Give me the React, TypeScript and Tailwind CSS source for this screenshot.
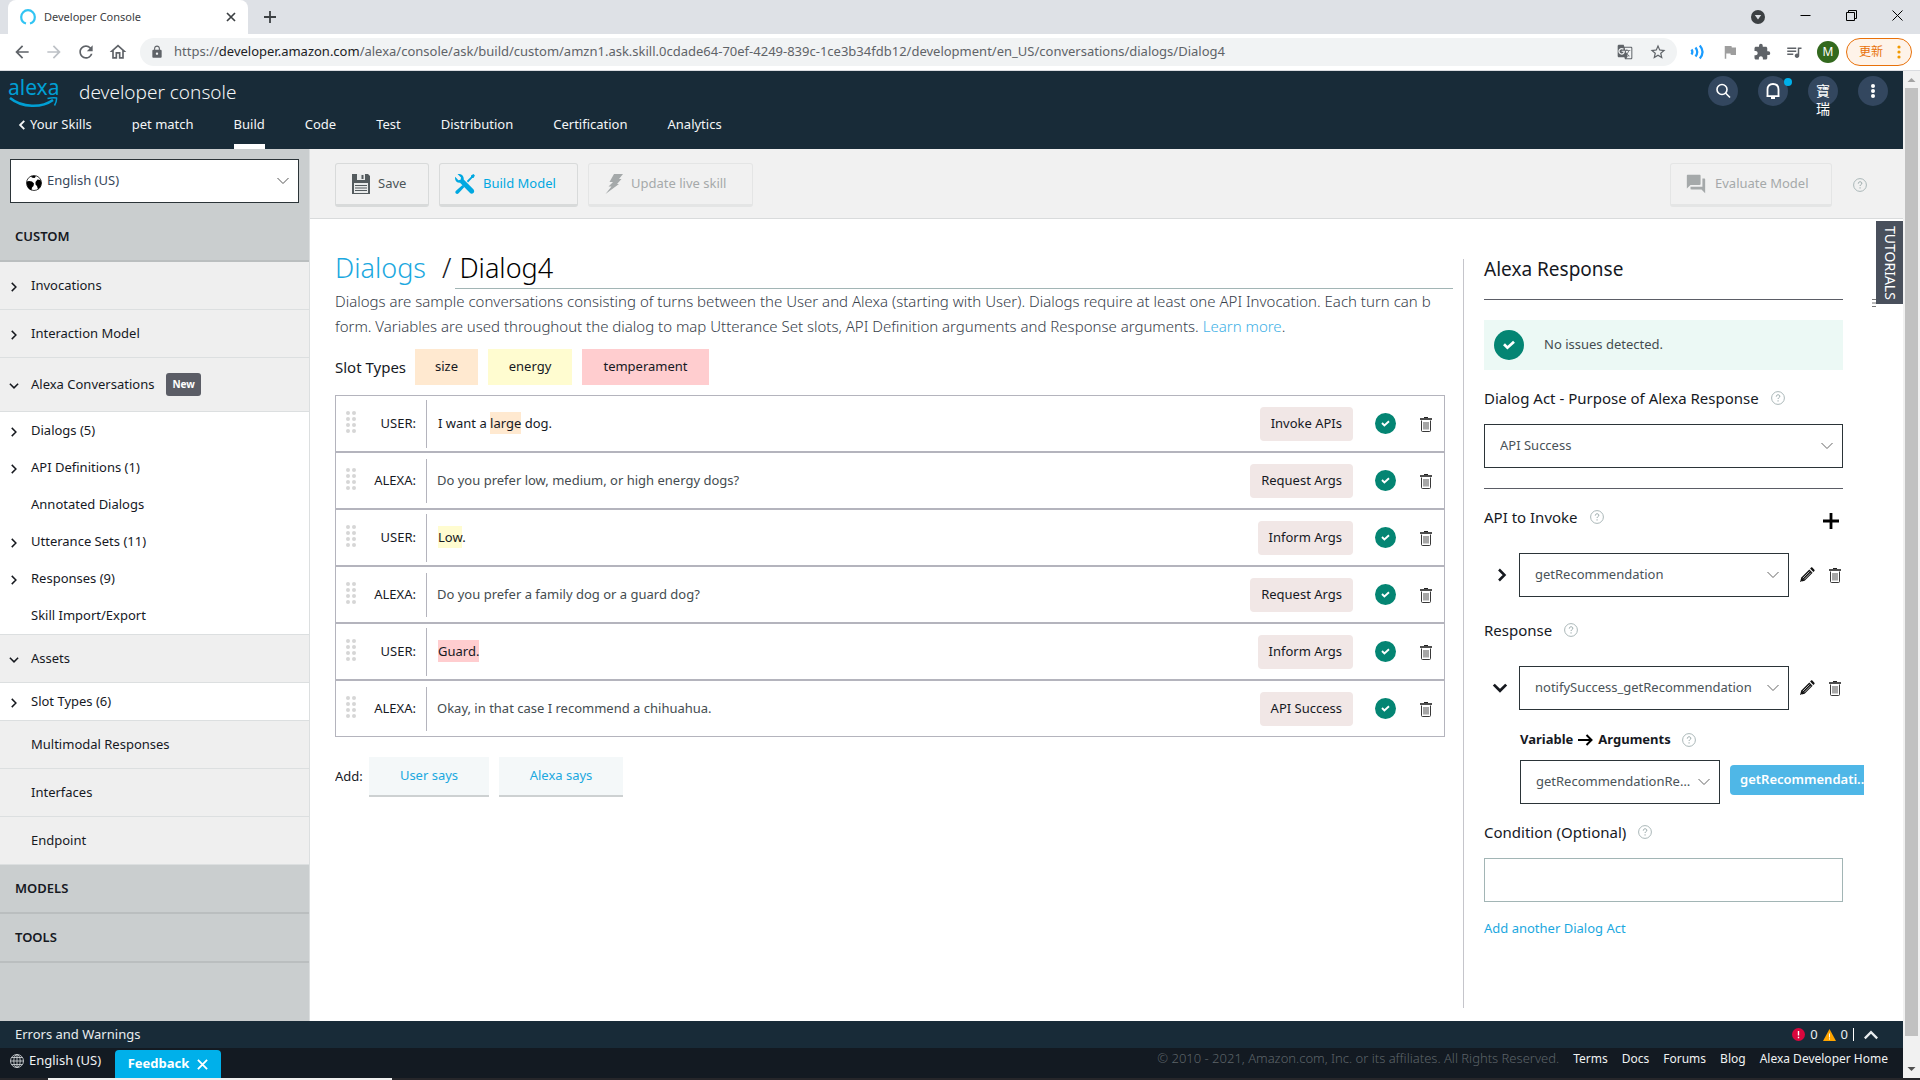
import type { ReactNode } from 'react';
import clsx from 'clsx';
import {
  MdArrowBack,
  MdArrowForward,
  MdExtension,
  MdFlag,
  MdForum,
  MdGTranslate,
  MdLock,
  MdOutlineHome,
  MdQueueMusic,
  MdRefresh,
  MdStarBorder,
} from 'react-icons/md';

type Tint = 'size' | 'energy' | 'temperament';

const TINTS: Record<Tint, string> = {
  size: 'bg-[#ffe9d0]',
  energy: 'bg-[#fffcd0]',
  temperament: 'bg-[#ffcdcf]',
};

const NAV_ITEMS = ['pet match', 'Build', 'Code', 'Test', 'Distribution', 'Certification', 'Analytics'];

const CONVERSATION_ITEMS = [
  { label: 'Dialogs (5)', arrow: true },
  { label: 'API Definitions (1)', arrow: true },
  { label: 'Annotated Dialogs', arrow: false },
  { label: 'Utterance Sets (11)', arrow: true },
  { label: 'Responses (9)', arrow: true },
  { label: 'Skill Import/Export', arrow: false },
];

const TURNS: { who: 'USER' | 'ALEXA'; text: ReactNode; act: string }[] = [
  {
    who: 'USER',
    text: (
      <>
        I want a <Mark tint="size">large</Mark> dog.
      </>
    ),
    act: 'Invoke APIs',
  },
  { who: 'ALEXA', text: 'Do you prefer low, medium, or high energy dogs?', act: 'Request Args' },
  {
    who: 'USER',
    text: (
      <>
        <Mark tint="energy">Low</Mark>.
      </>
    ),
    act: 'Inform Args',
  },
  { who: 'ALEXA', text: 'Do you prefer a family dog or a guard dog?', act: 'Request Args' },
  { who: 'USER', text: <Mark tint="temperament">Guard.</Mark>, act: 'Inform Args' },
  { who: 'ALEXA', text: 'Okay, in that case I recommend a chihuahua.', act: 'API Success' },
];

function Mark({ tint, children }: { tint: Tint; children: ReactNode }) {
  return <span className={clsx('py-0.5', TINTS[tint])}>{children}</span>;
}

function Chevron({ dir, className }: { dir: 'right' | 'down' | 'up' | 'left'; className?: string }) {
  const d = {
    right: 'M5 2.5l5.5 5.5L5 13.5',
    left: 'M11 2.5L5.5 8l5.5 5.5',
    down: 'M2.5 5L8 10.5l5.5-5.5',
    up: 'M2.5 11L8 5.5l5.5 5.5',
  }[dir];
  return (
    <svg viewBox="0 0 16 16" className={className} fill="none" stroke="currentColor" aria-hidden="true">
      <path d={d} />
    </svg>
  );
}

function HelpIcon() {
  return (
    <button type="button" aria-label="Help" className="shrink-0">
      <svg viewBox="0 0 14 14" className="size-3.5" fill="none" aria-hidden="true">
        <circle cx="7" cy="7" r="6.4" stroke="#aab7b8" />
        <path d="M5.3 5.6c0-1.1.8-1.8 1.8-1.8s1.7.6 1.7 1.5c0 1.2-1.7 1.3-1.7 2.7M7.05 9.3v1.2" stroke="#95a5a6" />
      </svg>
    </button>
  );
}

function CheckCircle({ className }: { className: string }) {
  return (
    <svg viewBox="0 0 21 21" className={clsx('shrink-0', className)} aria-hidden="true">
      <circle cx="10.5" cy="10.5" r="10.5" fill="#048573" />
      <path d="M7 10l2.4 2.4 4.6-4.2" fill="none" stroke="#fff" strokeWidth="1.9" />
    </svg>
  );
}

function TrashButton() {
  return (
    <button type="button" aria-label="Delete" className="shrink-0">
      <svg viewBox="0 0 12 16" className="h-4 w-3" fill="none" stroke="#222" aria-hidden="true">
        <path d="M4 1.5h4" />
        <path d="M0 3h12" strokeWidth="1.6" />
        <path d="M1.5 4.5v10q0 1 1 1h7q1 0 1-1v-10" strokeWidth=".9" />
        <path d="M4 6v7.5M6 6v7.5M8 6v7.5" strokeWidth=".8" />
      </svg>
    </button>
  );
}

function PencilButton() {
  return (
    <button type="button" aria-label="Edit" className="shrink-0">
      <svg viewBox="0 0 16 16" className="size-4" fill="#111" aria-hidden="true">
        <path d="M1 15l1.3-4.6 8-8 3.300 3.300-8 8z" />
        <path d="M11.1 1.600l1-1c.4-.4.8-.4 1.200 0l2.100 2.100c.4.4.4.8 0 1.200l-1 1z" />
        <path d="M3.800 11.200l6.700-6.700M5.200 12.400l6.700-6.700M2 13.900l.8.8" stroke="#fff" strokeWidth=".7" />
      </svg>
    </button>
  );
}

function Select({ label, value, className }: { label: string; value: string; className?: string }) {
  return (
    <div className={clsx('relative', className)}>
      <select
        aria-label={label}
        className="h-11 w-full appearance-none overflow-hidden border border-[#2b3438] bg-white pr-6 pl-[15px] text-[13px] text-ellipsis text-[#4a5358]"
      >
        <option>{value}</option>
      </select>
      <Chevron dir="down" className="pointer-events-none absolute top-3.5 right-2 size-4 text-[#666]" />
    </div>
  );
}

function BrowserChrome() {
  return (
    <div className="text-[#3c4043]">
      <div className="flex h-[34px] items-stretch bg-[#dee1e6] pl-2">
        <div className="flex w-60 items-center rounded-t-lg bg-white px-3">
          <svg viewBox="0 0 16 16" className="size-4" fill="none" stroke="#31c4f3" strokeWidth="2.2" aria-hidden="true">
            <path d="M6 14.5C2.7 13.6 1.2 11 1.2 8a6.8 6.8 0 0 1 13.6 0c0 3-1.5 5.6-4.8 6.5" />
          </svg>
          <span className="ml-2 flex-1 text-[11px]">Developer Console</span>
          <button type="button" aria-label="Close tab">
            <svg viewBox="0 0 10 10" className="size-2.5" stroke="#3c4043" strokeWidth="1.7" aria-hidden="true">
              <path d="M1 1l8 8M9 1L1 9" />
            </svg>
          </button>
        </div>
        <button type="button" aria-label="New tab" className="ml-4">
          <svg viewBox="0 0 12 12" className="size-3" stroke="#3c4043" strokeWidth="1.8" aria-hidden="true">
            <path d="M6 0v12M0 6h12" />
          </svg>
        </button>
        <div className="ml-auto flex items-center gap-[35px] pr-[17px] pb-1">
          <svg viewBox="0 0 14 14" className="mt-1 size-3.5" aria-hidden="true">
            <circle cx="7" cy="7" r="7" fill="#3c4043" />
            <path d="M3.8 5h6.4L7 9.5z" fill="#dee1e6" />
          </svg>
          <svg viewBox="0 0 11 11" className="size-[11px]" stroke="#000" aria-hidden="true">
            <path d="M.5 5.5h10" />
          </svg>
          <svg viewBox="0 0 11 11" className="size-[11px]" fill="none" stroke="#000" aria-hidden="true">
            <path d="M.5 2.5h8v8h-8zM2.5 2.5v-2h8v8h-2" />
          </svg>
          <svg viewBox="0 0 11 11" className="size-[11px]" stroke="#000" aria-hidden="true">
            <path d="M.5.5l10 10M10.5.5l-10 10" />
          </svg>
        </div>
      </div>
      <div className="flex h-[37px] items-center border-b border-[#dadce0] bg-white pl-3 text-[#5f6368]">
        <div className="flex w-32 items-center gap-3">
          <MdArrowBack className="size-5" />
          <MdArrowForward className="size-5 text-[#bdc1c6]" />
          <MdRefresh className="size-5" />
          <MdOutlineHome className="size-5" />
        </div>
        <div className="flex h-7 flex-1 items-center rounded-full bg-[#f1f3f4] px-2.5">
          <MdLock className="size-3.5" />
          <span className="ml-2.5 flex-1 text-[13px]">
            https://<span className="text-[#202124]">developer.amazon.com</span>
            /alexa/console/ask/build/custom/amzn1.ask.skill.0cdade64-70ef-4249-839c-1ce3b34fdb12/development/en_US/conversations/dialogs/Dialog4
          </span>
          <MdGTranslate className="size-4" />
          <MdStarBorder className="ml-4 size-[18px]" />
        </div>
        <div className="flex items-center gap-3.5 pr-2 pl-3">
          <svg viewBox="0 0 18 18" className="size-[18px]" fill="none" stroke="#1a9cff" strokeWidth="2.2" aria-hidden="true">
            <path d="M2.5 6.500q1.800 2.500 0 5M6.500 4.500q3.500 4.500 0 9M10.800 2.500q5.500 6.500 0 13" />
          </svg>
          <MdFlag className="size-[18px] text-[#9e9e9e]" />
          <MdExtension className="size-[18px]" />
          <MdQueueMusic className="size-[18px]" />
          <span className="-mr-[7px] flex size-[22px] items-center justify-center rounded-full bg-[#33691e] text-xs text-white">
            M
          </span>
          <button
            type="button"
            className="flex h-7 w-[66px] items-center justify-between rounded-full border border-[#e8710a] bg-[#fef3e9] pr-2.5 pl-3 text-xs text-[#e8710a]"
          >
            更新
            <svg viewBox="0 0 4 14" className="h-3.5 w-1" fill="#f29900" aria-hidden="true">
              <circle cx="2" cy="2" r="1.6" />
              <circle cx="2" cy="7" r="1.6" />
              <circle cx="2" cy="12" r="1.6" />
            </svg>
          </button>
        </div>
      </div>
    </div>
  );
}

function RoundButton({ label, children }: { label: string; children: ReactNode }) {
  return (
    <button
      type="button"
      aria-label={label}
      className="relative flex size-[30px] items-center justify-center rounded-full bg-[#33475f] text-white"
    >
      {children}
    </button>
  );
}

function Header() {
  return (
    <header className="flex h-[78px] justify-between bg-[#182b38] text-[#f4f6f7]">
      <div className="flex flex-col justify-between">
        <div className="flex h-[42px] items-center pl-2">
          <div className="w-[52px] text-[#009fd4]">
            <div className="text-[21px] leading-5">alexa</div>
            <svg viewBox="0 0 52 11" className="h-[11px] w-[52px]" fill="none" stroke="currentColor" aria-hidden="true">
              <path d="M2 1c12 10 32 10 43 2" strokeWidth="2.5" />
              <path d="M39.5 1.5C43 .8 46 .6 48.5 1c.3 2.6-.6 5.2-2 7.5" strokeWidth="1.5" />
            </svg>
          </div>
          <span className="ml-[19px] text-[19px] font-light">developer console</span>
        </div>
        <nav className="flex gap-10 pl-4 text-[13px]">
          <a href="#skills" className="flex h-[34px] items-start gap-0.5">
            <Chevron dir="left" className="mt-1 size-3 stroke-[2.5]" />
            Your Skills
          </a>
          {NAV_ITEMS.map((item) => (
            <a
              key={item}
              href={`#${item}`}
              className={clsx('h-[34px] border-b-[5px]', item === 'Build' ? 'border-white' : 'border-transparent')}
            >
              {item}
            </a>
          ))}
        </nav>
      </div>
      <div className="flex gap-5 pt-[5px] pr-[15px]">
        <RoundButton label="Search">
          <svg viewBox="0 0 16 16" className="size-4" fill="none" stroke="currentColor" strokeWidth="1.6" aria-hidden="true">
            <circle cx="7" cy="6.5" r="5" />
            <path d="M10.5 10l4.5 4.5" />
          </svg>
        </RoundButton>
        <RoundButton label="Notifications">
          <svg viewBox="0 0 16 16" className="size-4" fill="none" stroke="currentColor" strokeWidth="1.8" aria-hidden="true">
            <path d="M1.5 13.2h13M2.5 13V6.5Q2.5 1 8 1t5.5 5.5V13M6 15h4" />
          </svg>
          <span className="absolute top-0.5 -right-1 size-2 rounded-full bg-[#00b0ea]" />
        </RoundButton>
        <RoundButton label="Account">
          <span className="mt-[18px] w-4 text-sm leading-[18px]">寶瑞</span>
        </RoundButton>
        <RoundButton label="More">
          <svg viewBox="0 0 4 14" className="h-3.5 w-1" fill="currentColor" aria-hidden="true">
            <circle cx="2" cy="2" r="2" />
            <circle cx="2" cy="7" r="2" />
            <circle cx="2" cy="12" r="2" />
          </svg>
        </RoundButton>
      </div>
    </header>
  );
}

function SideRow({ label, arrow, className, badge }: { label: string; arrow?: 'right' | 'down'; className: string; badge?: string }) {
  return (
    <button type="button" className={clsx('flex w-full items-center pl-2 text-left', className)}>
      <span className="w-[23px]">{arrow && <Chevron dir={arrow} className="mt-0.5 size-3 stroke-2" />}</span>
      {label}
      {badge && (
        <span className="ml-3 flex h-[23px] items-center rounded-[3px] bg-[#5b5d66] px-1.5 text-[10px] font-bold text-white">
          {badge}
        </span>
      )}
    </button>
  );
}

function Sidebar() {
  const section = 'h-12 border-b border-[#dcdfe0] bg-[#efefef]';
  return (
    <aside className="flex w-[310px] shrink-0 flex-col border-r border-[#dcdfe0] bg-[#cacecf] text-[13px] text-[#16191f]">
      <div className="h-[113px] border-b-2 border-[#babebf]">
        <div className="relative mx-2.5 mt-2.5">
          <select
            aria-label="Language"
            className="h-11 w-full appearance-none border border-[#2b3438] bg-white pl-9 text-[13px] text-[#37475a]"
          >
            <option>English (US)</option>
          </select>
          <svg viewBox="0 0 16 16" className="pointer-events-none absolute top-4 left-4 size-4" aria-hidden="true">
            <circle cx="8" cy="8" r="7.5" fill="#fff" stroke="#111" strokeWidth=".8" />
            <path d="M.8 6.500l2.200-.5 3 .5 2 2-.5 2.500-1.500 1.500-.5 2.800C2.500 14.500.5 11.500.8 6.500zM4.500 1.500L8 .8l2 .8-1.500 1.500-2-.3zM9.500 7l2-2.500L14.500 5l1 3-1 4-2.500 2.500-1-3.500L9.500 9.500z" fill="#000" />
          </svg>
          <Chevron dir="down" className="pointer-events-none absolute top-3.5 right-2 size-4 text-[#555]" />
        </div>
        <h2 className="mt-6 pl-[15px] font-semibold">CUSTOM</h2>
      </div>
      <SideRow label="Invocations" arrow="right" className={section} />
      <SideRow label="Interaction Model" arrow="right" className={section} />
      <SideRow label="Alexa Conversations" arrow="down" badge="New" className="h-[54px] border-b border-[#dcdfe0] bg-[#efefef]" />
      {CONVERSATION_ITEMS.map((item) => (
        <SideRow key={item.label} label={item.label} arrow={item.arrow ? 'right' : undefined} className="h-[37px] bg-white" />
      ))}
      <SideRow label="Assets" arrow="down" className="h-[49px] border-y border-[#dcdfe0] bg-[#efefef]" />
      <SideRow label="Slot Types (6)" arrow="right" className="h-[38px] border-b border-[#dcdfe0] bg-white" />
      <SideRow label="Multimodal Responses" className={section} />
      <SideRow label="Interfaces" className={section} />
      <SideRow label="Endpoint" className={section} />
      <h2 className="flex h-[49px] items-center border-b-2 border-[#babebf] pl-[15px] font-semibold">MODELS</h2>
      <h2 className="flex h-[49px] items-center border-b-2 border-[#babebf] pl-[15px] font-semibold">TOOLS</h2>
    </aside>
  );
}

function ToolbarButton({ icon, label, className }: { icon: ReactNode; label: string; className: string }) {
  return (
    <button
      type="button"
      className={clsx('flex h-11 items-center gap-2 rounded-[3px] border border-b-[3px] text-[13px]', className)}
    >
      {icon}
      {label}
    </button>
  );
}

function Toolbar() {
  return (
    <div className="flex h-[70px] items-start border-b border-[#d9dbdc] bg-[#f1f1f1] pt-3.5 pr-9 pl-[25px]">
      <div className="flex gap-2.5">
        <ToolbarButton
          label="Save"
          className="w-[94px] border-[#d8dada] pl-4 text-[#4c5558]"
          icon={
            <svg viewBox="0 0 18 20" className="h-5 w-[18px]" aria-hidden="true">
              <path d="M0 0h16l2 2v18H0z" fill="#545b5e" />
              <path d="M5 0h8v6H5zM2 9h14v10H2z" fill="#e9ebeb" />
              <path d="M9.5 1h2v4h-2zM3 11h12v1H3zM3 13.5h12v1H3zM3 16h12v1H3z" fill="#545b5e" />
            </svg>
          }
        />
        <ToolbarButton
          label="Build Model"
          className="w-[139px] border-[#d8dada] pl-[15px] text-[#00a8e1]"
          icon={
            <svg viewBox="0 0 20 20" className="size-5" fill="currentColor" aria-hidden="true">
              <path d="M2.5 0L6 3.4 5.6 5.7 3.4 6.2.2 2.8C-.6 6 1.5 9 5 8.8l9.8 10c1 1 2.5 1.2 3.6.2s1-2.7 0-3.7L8.7 5.6C9.2 2 6.2-.6 2.5 0z" />
              <path d="M19.9 1.4L18.5 0 16 1.5v1.3l-4.2 4.3 1.3 1.3L17.3 4h1.2zM7.5 11L1 16.8c-1 1-.8 2 0 2.7.8.8 1.8.6 2.6-.3L9.4 12.900z" />
            </svg>
          }
        />
        <ToolbarButton
          label="Update live skill"
          className="w-[165px] border-[#e4e5e5] pl-4 text-[#a5a9aa]"
          icon={
            <svg viewBox="0 0 18 20" className="h-5 w-[18px]" fill="currentColor" aria-hidden="true">
              <path d="M9 0h9l-4 5h2.5L12 10h2L.5 20l6-7.500h-3L8 8H4.500z" />
            </svg>
          }
        />
      </div>
      <div className="ml-auto flex items-center gap-[21px]">
        <ToolbarButton
          label="Evaluate Model"
          className="w-[162px] border-[#e4e5e5] pl-3.5 text-[#a5a9aa]"
          icon={<MdForum className="size-[22px]" />}
        />
        <HelpIcon />
      </div>
    </div>
  );
}

function TurnRow({ who, text, act }: { who: 'USER' | 'ALEXA'; text: ReactNode; act: string }) {
  const user = who === 'USER';
  return (
    <li className="flex h-[57px] items-center border border-[#b4b4bd] pr-3">
      <svg viewBox="0 0 10 22" className="mb-1 ml-2.5 h-[22px] w-2.5" fill="#d6d6d6" aria-hidden="true">
        {[2, 8, 14, 20].map((y) => (
          <g key={y}>
            <circle cx="2" cy={y} r="2" />
            <circle cx="8" cy={y} r="2" />
          </g>
        ))}
      </svg>
      <span className="w-[60px] text-right text-[#16191f]">{who}:</span>
      <div
        className={clsx(
          'ml-2.5 flex flex-1 items-center border-l border-[#b4b4bd]',
          user ? 'h-12 pl-[11px] text-[#16191f]' : 'h-11 pl-2.5 text-[#444c50]',
        )}
      >
        <p>{text}</p>
      </div>
      <span className="flex h-[34px] items-center rounded bg-[#f1e7e6] px-[11px] text-[#16191f]">{act}</span>
      <CheckCircle className="mr-6 ml-[22px] size-[21px]" />
      <TrashButton />
    </li>
  );
}

function DialogEditor() {
  return (
    <section className="min-w-0 flex-1 overflow-hidden pt-[29px] pr-2.5 text-[13px] text-[#16191f]">
      <h1 className="flex h-[41px] items-start text-[27px] leading-10 font-light">
        <a href="#dialogs" className="text-[#1ba8e0]">
          Dialogs
        </a>
        <span className="mr-1 ml-4">/</span>
        <input
          aria-label="Dialog name"
          defaultValue="Dialog4"
          className="h-[41px] min-w-0 flex-1 border-b border-[#a2b5b5] px-1 pb-px text-black"
        />
      </h1>
      <p className="overflow-hidden text-[15px] leading-[25px] font-light whitespace-nowrap text-[#37404a]">
        Dialogs are sample conversations consisting of turns between the User and Alexa (starting with User). Dialogs
        require at least one API Invocation. Each turn can b
        <br />
        form. Variables are used throughout the dialog to map Utterance Set slots, API Definition arguments and Response
        arguments.{' '}
        <a href="#learn" className="text-[#3db0e6]">
          Learn more
        </a>
        .
      </p>
      <div className="mt-2.5 flex items-center">
        <span className="w-20 text-[15px]">Slot Types</span>
        <div className="flex gap-2.5">
          <span className="flex h-9 w-[63px] items-center justify-center bg-[#ffe9d0]">size</span>
          <span className="flex h-9 w-[84px] items-center justify-center bg-[#fffcd0]">energy</span>
          <span className="flex h-9 w-[127px] items-center justify-center bg-[#ffcdcf]">temperament</span>
        </div>
      </div>
      <ul className="mt-2.5 mr-2">
        {TURNS.map((turn, i) => (
          <TurnRow key={i} {...turn} />
        ))}
      </ul>
      <div className="mt-5 flex items-center gap-2.5">
        <span className="-mr-2.5 w-[34px]">Add:</span>
        <button type="button" className="h-10 w-[120px] border-b-2 border-[#cdd1d2] bg-[#f4f8f9] text-[#1ba8e0]">
          User says
        </button>
        <button type="button" className="h-10 w-[124px] border-b-2 border-[#cdd1d2] bg-[#f4f8f9] text-[#1ba8e0]">
          Alexa says
        </button>
      </div>
    </section>
  );
}

function FieldTitle({ children }: { children: ReactNode }) {
  return (
    <h3 className="flex items-center gap-3 text-[15px] leading-6 text-[#16191f]">
      {children}
      <HelpIcon />
    </h3>
  );
}

function ResponsePanel() {
  return (
    <section className="w-[440px] shrink-0 border-l border-[#c5c5cb] pr-[60px] pl-5 text-[13px] text-[#16191f]">
      <h2 className="h-[41px] border-b border-[#5b5d66] text-[19px] leading-5">Alexa Response</h2>
      <div className="mt-5 flex h-[50px] items-center bg-[#ecf9f5] pl-2.5 text-[#444c50]">
        <CheckCircle className="mr-5 size-[30px]" />
        No issues detected.
      </div>
      <div className="mt-4">
        <FieldTitle>Dialog Act - Purpose of Alexa Response</FieldTitle>
      </div>
      <Select label="Dialog act" value="API Success" className="mt-3.5" />
      <div className="mt-5 flex justify-between border-t border-[#5b5d66] pt-4">
        <FieldTitle>API to Invoke</FieldTitle>
        <button type="button" aria-label="Add API" className="mt-2 mr-1">
          <svg viewBox="0 0 16 16" className="size-4" stroke="#000" strokeWidth="2.8" aria-hidden="true">
            <path d="M8 0v16M0 8h16" />
          </svg>
        </button>
      </div>
      <div className="mt-6 flex items-center pr-0.5">
        <button type="button" aria-label="Expand API" className="w-[35px] pl-2.5">
          <Chevron dir="right" className="size-4 stroke-[2.5]" />
        </button>
        <Select label="API" value="getRecommendation" className="min-w-0 flex-1" />
        <div className="ml-2.5 flex items-center gap-3.5">
          <PencilButton />
          <TrashButton />
        </div>
      </div>
      <div className="mt-[21px]">
        <FieldTitle>Response</FieldTitle>
      </div>
      <div className="mt-6 flex items-center pr-0.5">
        <button type="button" aria-label="Collapse response" className="w-[35px] pl-[7px]">
          <Chevron dir="down" className="size-[18px] stroke-[2.5]" />
        </button>
        <Select label="Response" value="notifySuccess_getRecommendation" className="min-w-0 flex-1" />
        <div className="ml-2.5 flex items-center gap-3.5">
          <PencilButton />
          <TrashButton />
        </div>
      </div>
      <div className="-mr-5 pl-9">
        <h4 className="mt-5 flex items-center font-bold">
          Variable
          <svg viewBox="0 0 15 12" className="mx-[5px] h-3 w-[15px]" fill="none" stroke="#000" strokeWidth="2" aria-hidden="true">
            <path d="M0 6h13.5M8.5 1l5 5-5 5" />
          </svg>
          <span className="mr-[11px]">Arguments</span>
          <HelpIcon />
        </h4>
        <div className="mt-2.5 flex items-start gap-2.5">
          <Select label="Variable" value="getRecommendationResult" className="w-[200px] shrink-0" />
          <span className="mt-[5px] flex h-[30px] flex-1 items-center rounded-l bg-[#4fb7e7] pl-2.5 font-semibold whitespace-nowrap text-white">
            getRecommendati..
          </span>
        </div>
      </div>
      <div className="mt-4">
        <FieldTitle>Condition (Optional)</FieldTitle>
      </div>
      <input aria-label="Condition" className="mt-3.5 h-11 w-full border border-[#a2b5b5] px-4" />
      <a href="#add-act" className="mt-[17px] inline-block text-[#1ba8e0]">
        Add another Dialog Act
      </a>
    </section>
  );
}

function StatusBar() {
  return (
    <div className="flex h-[27px] items-center bg-[#182b38] pr-[23px] pl-[15px] text-[13px] text-[#e9edef]">
      <span>Errors and Warnings</span>
      <div className="ml-auto flex items-center">
        <svg viewBox="0 0 13 13" className="size-[13px]" aria-hidden="true">
          <circle cx="6.5" cy="6.5" r="6.5" fill="#d9073d" />
          <path d="M6.5 3v4.5M6.5 8.8v1.4" stroke="#fff" strokeWidth="1.4" />
        </svg>
        <span className="ml-[5px]">0</span>
        <svg viewBox="0 0 13 12" className="ml-[5px] h-3 w-[13px]" aria-hidden="true">
          <path d="M6.5 0L13 12H0z" fill="#ffa500" />
          <path d="M6.5 4.5v4M6.5 9.3v1.3" stroke="#fff" />
        </svg>
        <span className="ml-[5px]">0</span>
        <span className="mr-2 ml-[5px] h-[13px] w-px bg-white" />
        <button type="button" aria-label="Expand errors">
          <Chevron dir="up" className="size-[18px] stroke-2" />
        </button>
      </div>
    </div>
  );
}

function Footer() {
  return (
    <footer className="relative flex h-[30px] items-center bg-[#131a22] pr-[15px] pb-2 pl-2.5 text-[13px] text-[#f0f2f3]">
      <a href="#language" className="flex items-center gap-[5px] pt-1">
        <svg viewBox="0 0 14 14" className="size-3.5" fill="none" stroke="#c9ced1" strokeWidth=".9" aria-hidden="true">
          <circle cx="7" cy="7" r="6.5" />
          <ellipse cx="7" cy="7" rx="3.2" ry="6.5" />
          <path d="M7 .5v13M.5 7h13M1.5 3.5h11M1.5 10.5h11" />
        </svg>
        English (US)
      </a>
      <button
        type="button"
        className="absolute bottom-0 left-[115px] flex h-7 w-[106px] items-center justify-center gap-2 rounded-t bg-[#00b0ea] text-[13px] font-bold text-white"
      >
        Feedback
        <svg viewBox="0 0 12 12" className="size-[11px]" stroke="#fff" strokeWidth="2" aria-hidden="true">
          <path d="M1 1l10 10M11 1L1 11" />
        </svg>
      </button>
      <p className="mr-3.5 ml-auto font-light text-[#5d6469]">
        © 2010 - 2021, Amazon.com, Inc. or its affiliates. All Rights Reserved.
      </p>
      <nav className="flex gap-3.5 text-xs">
        {['Terms', 'Docs', 'Forums', 'Blog', 'Alexa Developer Home'].map((item) => (
          <a key={item} href={`#${item}`}>
            {item}
          </a>
        ))}
      </nav>
    </footer>
  );
}

function Scrollbar() {
  return (
    <div className="flex w-[17px] shrink-0 flex-col items-center justify-between bg-[#f1f1f1]">
      <svg viewBox="0 0 17 17" className="size-[17px]" fill="#a3a3a3" aria-hidden="true">
        <path d="M4.5 11h8l-4-4z" />
      </svg>
      <div className="mb-[25px] w-[13px] flex-1 bg-[#c1c1c1]" />
      <svg viewBox="0 0 17 17" className="size-[17px]" fill="#505050" aria-hidden="true">
        <path d="M4.5 6h8l-4 4z" />
      </svg>
    </div>
  );
}

export default function App() {
  return (
    <div className="flex min-h-screen flex-col bg-white font-['Noto_Sans','Noto_Sans_CJK_TC',sans-serif]">
      <BrowserChrome />
      <div className="flex flex-1">
        <div className="flex min-w-0 flex-1 flex-col">
          <Header />
          <div className="flex flex-1">
            <Sidebar />
            <main className="relative flex min-w-0 flex-1 flex-col">
              <Toolbar />
              <div className="flex flex-1 pl-[25px]">
                <DialogEditor />
                <div className="flex pt-10 pb-[13px]">
                  <ResponsePanel />
                </div>
              </div>
              <svg
                viewBox="0 0 4 8"
                className="absolute top-[150px] right-[27px] h-2 w-1"
                stroke="#777"
                aria-hidden="true"
              >
                <path d="M0 .5h4M0 4h4M0 7.5h4" />
              </svg>
              <button
                type="button"
                className="absolute top-[72px] right-0 flex h-[83px] w-[27px] items-center justify-center bg-[#49505c] text-sm text-white [writing-mode:vertical-rl]"
              >
                TUTORIALS
              </button>
            </main>
          </div>
          <StatusBar />
          <Footer />
        </div>
        <Scrollbar />
      </div>
      {/* top edge of the desktop taskbar */}
      <div className="h-0.5 bg-[#26262a]">
        <div className="ml-12 h-0.5 w-[344px] bg-[#f0f0f0]" />
      </div>
    </div>
  );
}
